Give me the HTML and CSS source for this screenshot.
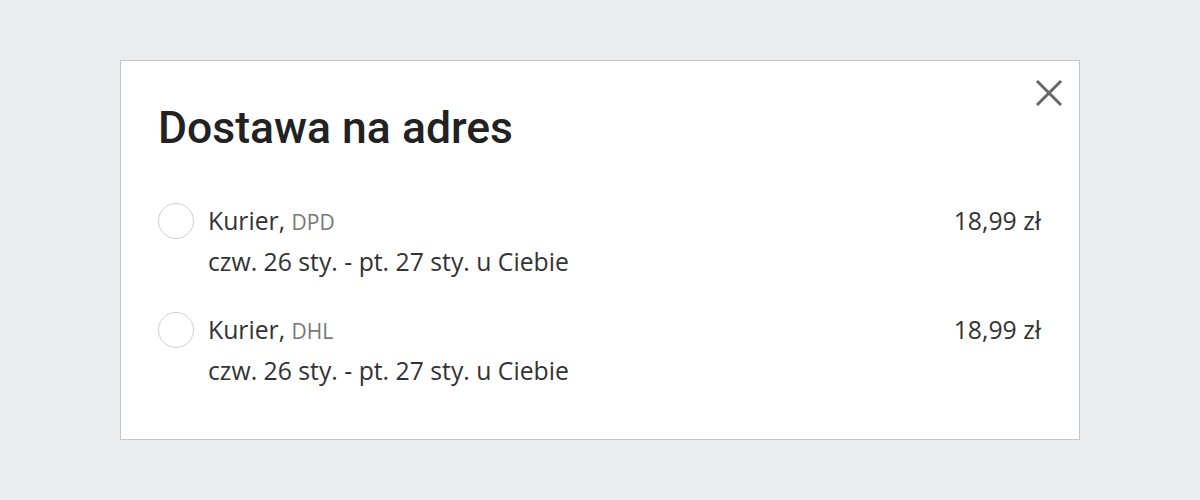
FILE: index.html
```html
<!DOCTYPE html>
<html lang="pl">
<head>
<meta charset="utf-8">
<link rel="stylesheet" href="styles.css">
</head>
<body>
<div class="card">
  <button class="close" aria-label="Zamknij">
    <svg width="28" height="28" viewBox="0 0 28 28"><path d="M2 2 L26 26 M26 2 L2 26" stroke="#666" stroke-width="3" fill="none"/></svg>
  </button>
  <h1 class="title">Dostawa na adres</h1>
  <div class="options">
    <div class="option">
      <span class="radio"></span>
      <div class="info">
        <div class="name">Kurier, <span class="carrier">DPD</span></div>
        <div class="date">czw. 26 sty. - pt. 27 sty. u Ciebie</div>
      </div>
      <div class="price">18,99 zł</div>
    </div>
    <div class="option">
      <span class="radio"></span>
      <div class="info">
        <div class="name">Kurier, <span class="carrier">DHL</span></div>
        <div class="date">czw. 26 sty. - pt. 27 sty. u Ciebie</div>
      </div>
      <div class="price">18,99 zł</div>
    </div>
  </div>
</div>
</body>
</html>
```
FILE: styles.css
```css
html, body {
  margin: 0;
  padding: 0;
}
body {
  background: #e9edf0;
  padding-top: 60px;
  font-family: "Open Sans", "Liberation Sans", sans-serif;
  color: #333;
}
.card {
  position: relative;
  box-sizing: border-box;
  width: 960px;
  height: 380px;
  margin: 0 auto;
  background: #fff;
  border: 1px solid #c6c6c6;
  padding: 41px 38px 0 37px;
}
.close {
  position: absolute;
  top: 18px;
  right: 16px;
  width: 28px;
  height: 28px;
  padding: 0;
  border: 0;
  background: none;
  cursor: pointer;
}
.close svg { display: block; }
.title {
  margin: 0 0 47px;
  font-family: Roboto, "Liberation Sans", sans-serif;
  font-weight: 500;
  font-size: 44.5px;
  line-height: 52px;
  color: #222;
}
.options {
  display: flex;
  flex-direction: column;
  gap: 28px;
}
.option {
  display: flex;
  align-items: flex-start;
}
.radio {
  flex: none;
  box-sizing: border-box;
  width: 36px;
  height: 36px;
  margin-top: 2px;
  border: 1.5px solid #cfcfcf;
  border-radius: 50%;
}
.info {
  flex: 1;
  margin-left: 14px;
  font-size: 24.75px;
  line-height: 40px;
}
.carrier {
  font-size: 21px;
  color: #777;
}
.price {
  font-size: 24.75px;
  line-height: 40px;
}
```
